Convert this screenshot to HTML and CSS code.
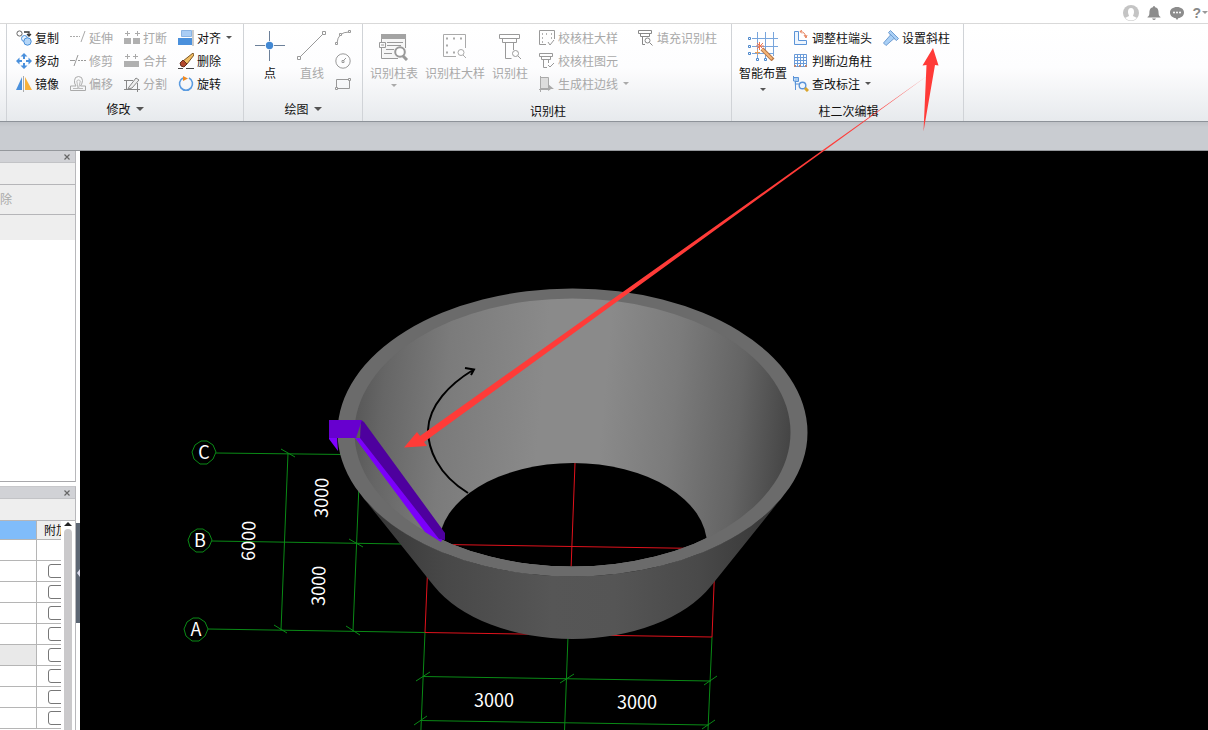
FILE: index.html
```html
<!DOCTYPE html>
<html lang="zh-CN">
<head>
<meta charset="utf-8">
<title>柱二次编辑</title>
<link rel="stylesheet" href="styles.css">
</head>
<body>
<div class="app">
  <header class="topbar">
    <button class="top-btn" aria-label="用户"><svg width="16" height="16" viewBox="0 0 16 16"><circle cx="8" cy="8" r="8" fill="#c4c4c4"/><path d="M5 7a3 4 0 0 1 6 0c0 2-1 3-1 4l4 2q-6 5-12 0l4-2c0-1-1-2-1-4z" fill="#fff"/></svg></button>
    <button class="top-btn" aria-label="通知"><svg width="16" height="16" viewBox="0 0 16 16"><path d="M8 1q1 0 1 1.200c3 .6 3.600 3 3.600 5.800 0 2 .5 3 1.900 4v.6h-13v-.6C2.900 11 3.400 10 3.400 8c0-2.800.6-5.200 3.600-5.800Q7 1 8 1zM6 13.500h4q-2 3-4 0z" fill="#8c8c8c"/></svg></button>
    <button class="top-btn" aria-label="消息"><svg width="16" height="16" viewBox="0 0 16 16"><path d="M8 2c4 0 7 2.300 7 5.500S12 13 9.500 13L8 15l-1.500-2C4 13 1 10.700 1 7.500S4 2 8 2z" fill="#8c8c8c"/><circle cx="5" cy="7.500" r="1" fill="#fff"/><circle cx="8" cy="7.500" r="1" fill="#fff"/><circle cx="11" cy="7.500" r="1" fill="#fff"/></svg></button>
    <button class="top-btn help">?<span class="caret small"></span></button>
  </header>

  <nav class="ribbon">
    <div class="group stub"></div>

    <section class="group modify">
      <div class="tools four">
        <button class="tool"><svg class="ic" viewBox="0 0 16 16" fill="none"><circle cx="3.500" cy="3.500" r="2.600" stroke="#666"/><path d="M8 2h5v4M11 4l2 2 2-2" stroke="#333" stroke-width="1.300"/><circle cx="8.500" cy="8.500" r="3" fill="#e4f0fc" stroke="#4a90d9"/><circle cx="11.500" cy="11.500" r="3.700" fill="#b5d6f7" stroke="#4a90d9"/></svg>复制</button>
        <button class="tool" disabled><svg class="ic" viewBox="0 0 16 16" fill="none" stroke="#aaa"><path d="M0 6.500h10" stroke-dasharray="2 1"/><path d="M11 12l4-11"/></svg>延伸</button>
        <button class="tool" disabled><svg class="ic" viewBox="0 0 16 16"><path d="M0 8h7v6H0zM9 8h7v6H9z" fill="#b0b0b0"/><path d="M1 3.500h5M3.500 1v5M11 3.500h5M13.500 1v5" stroke="#aaa"/></svg>打断</button>
        <button class="tool"><svg class="ic" viewBox="0 0 16 16"><path d="M3.500.5h10v6h-10z" fill="#a9cdf5" stroke="#8bb4e3"/><path d="M0 8h14v7H0z" fill="#4a90dc"/><path d="M15 0v16" stroke="#999"/></svg>对齐<span class="caret"></span></button>

        <button class="tool"><svg class="ic" viewBox="0 0 16 16"><path d="M8 0l3.500 3.500H9V6H7V3.500H4.500zM8 16l3.500-3.500H9V10H7v2.500H4.500zM0 8l3.500-3.500V7H6v2H3.500v2.500zM16 8l-3.500-3.500V7H10v2h2.500v2.500z" fill="#4a90dc"/></svg>移动</button>
        <button class="tool" disabled><svg class="ic" viewBox="0 0 16 16" fill="none" stroke="#999"><path d="M0 7.500h5M4 13l4-11"/><path d="M8 7.500h8" stroke-dasharray="2 1"/></svg>修剪</button>
        <button class="tool" disabled><svg class="ic" viewBox="0 0 16 16"><path d="M0 8h15v6H0z" fill="#b0b0b0"/><path d="M1 3.500h5M3.500 1v5M9 3.500h5M11.500 1v5" stroke="#aaa"/></svg>合并</button>
        <button class="tool"><svg class="ic" viewBox="0 0 16 16"><path d="M15 0l1 2-7 9-4-3z" fill="#f0bd62" stroke="#7b5523"/><path d="M5 7l4 4-3 3-3-1-1-3z" fill="#b2482d" stroke="#63301f"/><path d="M0 15.500h5M8 15.500h8" stroke="#444"/></svg>删除</button>

        <button class="tool"><svg class="ic" viewBox="0 0 16 16"><path d="M6 1v13H0z" fill="#4a90dc"/><path d="M9 1v13h7z" fill="#f8b13a"/><path d="M7.500 0v16" stroke="#aaa"/></svg>镜像</button>
        <button class="tool" disabled><svg class="ic" viewBox="0 0 16 16" fill="none" stroke="#aaa"><path d="M.5 14.500v-4.500H6Q4 7 4.500 4.500a4 4 0 0 1 8 0Q12.500 7 10.500 10h5v4.500z"/><path d="M3 12.500h5Q7.500 9 6.800 5a2 2 0 0 1 3.500 0Q9.500 9 8.500 12.500H13" stroke="#bbb"/></svg>偏移</button>
        <button class="tool" disabled><svg class="ic" viewBox="0 0 16 16" fill="none" stroke="#888"><path d="M0 4.500h9M2.500 4v10M0 13.500h16M13.500 7v9"/><path d="M5 11l7-9 3 2-7 8-4 1z" fill="#eee"/></svg>分割</button>
        <button class="tool"><svg class="ic" viewBox="0 0 16 16" fill="none"><path d="M5 2a6.500 6.500 0 1 0 6 0" stroke="#5a9be0" stroke-width="1.600"/><path d="M5 0l5 2.500L5 5z" fill="#ee8a24"/></svg>旋转</button>
      </div>
      <h2 class="title">修改<span class="caret big-caret"></span></h2>
    </section>

    <section class="group draw">
      <div class="tools">
        <button class="big"><svg class="bic" viewBox="0 0 30 30"><path d="M14.500 0v30M0 14.500h30" stroke="#6c8099"/><circle cx="14.500" cy="14.500" r="4.500" fill="#fff"/><circle cx="14.500" cy="14.500" r="3.700" fill="#4288d3"/></svg>点</button>
        <button class="big" disabled><svg class="bic" viewBox="0 0 30 30" fill="none" stroke="#999"><path d="M3 26L26 3"/><path d="M.5 25.500h3v3h-3zM25.500.5h3v3h-3z" fill="#fff"/></svg>直线</button>
        <div class="stack">
          <button class="tool" disabled aria-label="弧"><svg class="ic" viewBox="0 0 16 16" fill="none" stroke="#999"><path d="M2 13Q3 2 14 2"/><path d="M.5 12.500h2v2h-2zM4.500 3.500h2v2h-2zM13.500.5h2v2h-2z" fill="#fff"/></svg></button>
          <button class="tool" disabled aria-label="圆"><svg class="ic" viewBox="0 0 16 16" fill="none" stroke="#999"><circle cx="8" cy="8" r="7.200"/><path d="M7 7.500h2v2H7zM9 7l2-2"/></svg></button>
          <button class="tool" disabled aria-label="矩形"><svg class="ic" viewBox="0 0 16 16" fill="none" stroke="#999"><path d="M1.500 3.500h13v9h-13z"/><path d="M.5 11.500h2v2h-2zM13.500 2.500h2v2h-2z" fill="#fff"/></svg></button>
        </div>
      </div>
      <h2 class="title">绘图<span class="caret big-caret"></span></h2>
    </section>

    <section class="group identify">
      <div class="tools">
        <button class="big" disabled><svg class="bic" viewBox="0 0 30 30" fill="none" stroke="#999"><path d="M3.500 3.500h24v24h-24z" fill="#f6f6f6" stroke="none"/><path d="M2 3h25v5H2z" fill="#a3a3a3" stroke="none"/><path d="M2.500 8v3M2.500 17v10.500H19M26.500 8v9M8 11.500h16M8 14.500h14M7 18.500h8M5 22.500h8"/><path d="M.5 11.500h6v5h-6zM2 14h3"/><circle cx="21" cy="21" r="4.800" fill="#fff" stroke-width="2"/><path d="M24 25l4 4" stroke-width="3"/></svg>识别柱表<span class="caret small"></span></button>
        <button class="big" disabled><svg class="bic" viewBox="0 0 30 30" fill="none" stroke="#aaa"><path d="M16 25.500H3.500v-22h22V17"/><path d="M6 7.500h2m5 0h2m5 0h2M6 14.500h2M6 21.500h2m5 0h2" stroke-width="2"/><circle cx="21" cy="21.500" r="3" fill="#fff"/><path d="M23 24l3 3"/></svg>识别柱大样</button>
        <button class="big" disabled><svg class="bic" viewBox="0 0 30 30" fill="none" stroke="#999"><path d="M4.500 3.500h20v4h-20zM7.500 7.500h14v4h-14zM10.500 11.500v16h6M18.500 11.500V19"/><circle cx="20.500" cy="22.500" r="3" fill="#fff"/><path d="M23 25l3 3"/></svg>识别柱</button>
        <div class="stack">
          <button class="tool" disabled><svg class="ic" viewBox="0 0 16 16" fill="none" stroke="#999"><path d="M7 14.500H.5V.5h15V9"/><path d="M3 4h1m3 0h1m4 0h1M3 8h1m8 0h1M3 12h1" stroke-width="1.500"/><path d="M9 12l2 3 4-5"/></svg>校核柱大样</button>
          <button class="tool" disabled><svg class="ic" viewBox="0 0 16 16" fill="none" stroke="#999"><path d="M.5.5h13v3H.5zM2.500 3.500v3h9v-3M4.500 6.500v8H8M9.500 6.500V10M9 12l2 2 4-4"/></svg>校核柱图元</button>
          <button class="tool" disabled><svg class="ic" viewBox="0 0 16 16" fill="none" stroke="#aaa"><path d="M1.500 1.500h8v11h-8z" fill="#ddd"/><path d="M1.500 0v16M0 13.500h11"/><path d="M9 8l6 5h-3l-3 2z" fill="#aaa" stroke="none"/></svg>生成柱边线<span class="caret"></span></button>
        </div>
        <div class="stack">
          <button class="tool" disabled><svg class="ic" viewBox="0 0 16 16" fill="none" stroke="#888"><path d="M.5.5h13v3H.5zM2.500 3.500v3h9v-3M4.500 6.500v8H7"/><circle cx="9.500" cy="10.500" r="2.500"/><path d="M11.500 12.500l3 3"/></svg>填充识别柱</button>
        </div>
      </div>
      <h2 class="title low">识别柱</h2>
    </section>

    <section class="group edit">
      <div class="tools">
        <button class="big"><svg class="bic" viewBox="0 0 30 30" fill="none" stroke="#78a5dc"><path d="M4 7.500h26M4 15.500h26M4 22.500h22M9.500 1v26M17.500 1v27M25.500 1v24"/><path d="M.5 6.500h2v2h-2zM.5 14.500h2v2h-2zM.5 21.500h2v2h-2zM8.500 27.500h2v2h-2zM16.500 27.500h2v2h-2z" fill="#fff" stroke="#4d88cc"/><path d="M14 18l11 11" stroke="#b87848" stroke-width="4"/><path d="M14 18l10 10" stroke="#f5b577" stroke-width="2"/><path d="M11.500 11v8M8 15h8M9 12l6 6M15 12l-6 6" stroke="#f07850"/><path d="M9.500 19v5M7 21.500h5" stroke="#e8a05c"/></svg>智能布置<span class="caret small lower"></span></button>
        <div class="stack">
          <button class="tool"><svg class="ic" viewBox="0 0 16 16" fill="none" stroke="#5b94d8"><path d="M1.500 1.500h4v9h8v4h-12z" fill="#eef5fd"/><path d="M7 1.500q5 0 6 6" stroke="#e8835d"/><path d="M9 0L7 1.500 9 3.500M11 5l2 3 1-3" stroke="#e8835d"/></svg>调整柱端头</button>
          <button class="tool"><svg class="ic" viewBox="0 0 16 16" fill="none" stroke="#6a9bd8"><path d="M1.500 1.500h12v12h-12zM4.500 1v13M7.500 1v13M10.500 1v13M1 4.500h13M1 7.500h13M1 10.500h13"/><path d="M1 12h2v2H1zM6 12h2v2H6zM12 12h2v2h-2z" fill="#b98572" stroke="none"/></svg>判断边角柱</button>
          <button class="tool"><svg class="ic" viewBox="0 0 16 16" fill="none" stroke="#5b94d8"><path d="M.5 0v5h2v9M.5 1.500h5v4h-3M2.500 8H6" fill="#a8cdf2"/><circle cx="9.500" cy="9.500" r="3.300" fill="#eef5fd" stroke-width="1.400"/><path d="M12 12l3 3" stroke="#d9a52c" stroke-width="3"/></svg>查改标注<span class="caret"></span></button>
        </div>
        <div class="stack">
          <button class="tool"><svg class="ic" viewBox="0 0 16 16"><path d="M7.500.5l8 8-2 2-2.500-2L3 15.500.500 13 7.500 5 5.500 2.500z" fill="#a9cff5" stroke="#6f9dd2"/><path d="M7 4l5 5" stroke="#6f9dd2"/></svg>设置斜柱</button>
        </div>
      </div>
      <h2 class="title low">柱二次编辑</h2>
    </section>
  </nav>
  <div class="strip"></div>

  <main class="work">
    <aside class="side">
      <section class="panel upper">
        <header class="panel-head"><button class="close" aria-label="关闭"><svg width="6" height="6" viewBox="0 0 6 6"><path d="M.5.5l5 5M5.500.5l-5 5" stroke="#666" stroke-width="1.200"/></svg></button></header>
        <div class="bar"></div>
        <div class="bar tall"><button class="cut" disabled>除</button></div>
        <div class="bar last"></div>
      </section>
      <section class="panel lower-panel">
        <header class="panel-head"><button class="close" aria-label="关闭"><svg width="6" height="6" viewBox="0 0 6 6"><path d="M.5.5l5 5M5.500.5l-5 5" stroke="#666" stroke-width="1.200"/></svg></button></header>
        <div class="bar"></div>
        <div class="grid-area">
          <div class="clip">
            <table class="props">
              <thead><tr><th class="sel"></th><th class="extra">附加</th></tr></thead>
              <tbody>
                <tr><td></td><td></td></tr>
                <tr><td></td><td><input type="checkbox" aria-label="附加 2"></td></tr>
                <tr><td></td><td><input type="checkbox" aria-label="附加 3"></td></tr>
                <tr><td></td><td><input type="checkbox" aria-label="附加 4"></td></tr>
                <tr><td></td><td><input type="checkbox" aria-label="附加 5"></td></tr>
                <tr><td class="shade"></td><td><input type="checkbox" aria-label="附加 6"></td></tr>
                <tr><td></td><td><input type="checkbox" aria-label="附加 7"></td></tr>
                <tr><td></td><td><input type="checkbox" aria-label="附加 8"></td></tr>
                <tr><td></td><td><input type="checkbox" aria-label="附加 9"></td></tr>
              </tbody>
            </table>
          </div>
          <div class="scroll"><span class="up"></span><span class="thumb"></span></div>
        </div>
      </section>
      <button class="splitter" aria-label="折叠"><svg width="4" height="8" viewBox="0 0 4 8"><path d="M4 0v8L1 4z" fill="#dde"/></svg></button>
    </aside>

    <div class="view">
      <svg class="scene" role="img" aria-label="轴网与斜柱三维视图">
        <defs>
          <linearGradient id="inside" gradientUnits="userSpaceOnUse" x1="354" y1="425" x2="792" y2="465">
            <stop offset="0" stop-color="#585858"/><stop offset=".06" stop-color="#666"/><stop offset=".2" stop-color="#7b7b7b"/><stop offset=".42" stop-color="#8a8a8a"/><stop offset=".56" stop-color="#8a8a8a"/><stop offset=".72" stop-color="#7b7b7b"/><stop offset=".87" stop-color="#646464"/><stop offset="1" stop-color="#424242"/>
          </linearGradient>
          <linearGradient id="outside" gradientUnits="userSpaceOnUse" x1="361" y1="0" x2="784" y2="0">
            <stop offset="0" stop-color="#343434"/><stop offset=".2" stop-color="#484848"/><stop offset=".45" stop-color="#565656"/><stop offset=".6" stop-color="#555"/><stop offset=".8" stop-color="#494949"/><stop offset="1" stop-color="#343434"/>
          </linearGradient>
          <clipPath id="mouth"><ellipse cx="572.500" cy="432.500" rx="218" ry="134"/></clipPath>
        </defs>
        <g transform="translate(-80 -151)">
          <g class="axis">
            <path d="M216 453L345 454.500M212 541L401 544M208 629L425 632.500"/>
            <path d="M288 453L281 630M360 460L353 631"/>
            <path d="M281 449L295 457M274 625L287 633M349 539L363 547M346 626L360 635"/>
            <path d="M425 632L418 800M568 636L562 800M712 637L705 800"/>
            <path d="M423 676.500L711 681M420 720.500L709 725"/>
            <path d="M416 681L430 672M560 683L574 674M704 685L717 676M414 725L427 716M702 729L715 720"/>
            <path d="M216 452l-3 7-6 5h-7l-6-5-2-7 3-7 6-4h6l6 4z"/>
            <path d="M212 540l-3 7-6 5h-7l-6-5-2-7 3-7 6-4h6l6 4z"/>
            <path d="M208 629l-3 7-6 5h-7l-6-5-2-7 3-7 6-4h6l6 4z"/>
          </g>
          <path class="beam" d="M428 560L425 632.500L712 637L715 560"/>
          <path d="M361 495L434 586A154 94 0 0 0 711 586L784 495A235 144 0 0 1 361 495z" fill="url(#outside)"/>
          <ellipse cx="572.500" cy="432.500" rx="220" ry="136" fill="url(#inside)"/>
          <g clip-path="url(#mouth)">
            <ellipse cx="573" cy="545" rx="134" ry="82"/>
            <path class="beam" d="M575 463L571 570M445 544.500L700 548.500"/>
          </g>
          <path fill-rule="evenodd" fill="#6b6b6b" d="M337.500 432.500a235 144 0 0 1 470 0a235 144 0 0 1-470 0zM354.500 432.500a218 134 0 0 0 436 0a218 134 0 0 0-436 0z"/>
          <path d="M468 493C437 474 428 448 428 430C429 405 450 384 473 370M465 368L474 369.500L471 375" fill="none" stroke="#000" stroke-width="2"/>
          <path d="M329 437h8l1 14-9-12z" fill="#7f00ff"/>
          <path d="M355 438h10l79 98-3 6-16-10z" fill="#7b00fa"/>
          <path d="M361 420l3 2 81 111v7l-6-1-79-101z" fill="#4e009e"/>
          <path d="M329 420h33l-6 18h-27z" fill="#6700cf"/>
          <g class="labels">
            <text x="204" y="459">C</text><text x="200" y="547">B</text><text x="196" y="636">A</text>
            <text x="494" y="707">3000</text><text x="637" y="709">3000</text>
            <text transform="translate(328 498) rotate(-89)">3000</text>
            <text transform="translate(325 586) rotate(-89)">3000</text>
            <text transform="translate(255 541) rotate(-89)">6000</text>
          </g>
        </g>
      </svg>
    </div>
  </main>

  <svg class="callout" aria-hidden="true">
    <path d="M404 447.500L417 432L420 436L927 76L424 442L427 446z"/>
    <path d="M933 48L938.500 65.500L935 65L923.500 131.500L926.500 65L922.500 65.500z"/>
  </svg>
</div>
</body>
</html>
```
FILE: styles.css
```css
* { box-sizing: border-box; }

body {
  margin: 0;
  background: #fff;
  color: #111;
  font: 12px/16px "Noto Sans CJK SC", "Liberation Sans", sans-serif;
}

button {
  margin: 0;
  padding: 0;
  border: 0;
  background: none;
  color: inherit;
  font: inherit;
  white-space: nowrap;
}

button:disabled { color: #a9a9a9; }
svg { display: block; flex: none; }

.app {
  position: relative;
  display: flex;
  flex-direction: column;
  height: 100vh;
  overflow: hidden;
}

/* Title bar */
.topbar {
  display: flex;
  flex: none;
  align-items: center;
  justify-content: flex-end;
  gap: 7px;
  height: 24px;
  padding-top: 2px;
  border-bottom: 1px solid #d9d9d9;
}

.help {
  display: flex;
  align-items: center;
  gap: 1px;
  color: #888;
  font: bold 14px/16px "Liberation Sans", sans-serif;
}

.caret {
  width: 0;
  border: 3px solid transparent;
  border-top-color: #555;
  border-bottom: 0;
}

.caret.small { border-width: 3px 3px 0; }
.help .caret { border-top-color: #999; }
.caret.big-caret { border-width: 4px 4px 0; }
button:disabled .caret { border-top-color: #aaa; }

/* Ribbon */
.ribbon {
  display: flex;
  flex: none;
  height: 98px;
  background: linear-gradient(#fff 0, #fdfdfe 45%, #e7eaed 100%);
  border-bottom: 1px solid #8d9299;
}

.group {
  display: flex;
  flex: none;
  flex-direction: column;
  justify-content: space-between;
  padding-top: 2px;
  border-right: 1px solid #d0d3d7;
}

.stub { width: 7px; }
.modify { width: 237px; padding-left: 9px; padding-right: 9px; }
.draw { width: 119px; }
.identify { width: 369px; }
.edit { width: 232px; }

.tools { display: flex; }

.four {
  display: grid;
  grid-template-columns: repeat(4, 54px);
}

.tool {
  display: flex;
  align-items: center;
  gap: 3px;
  height: 23px;
}

.tool .caret { margin-left: 2px; }
.ic { width: 16px; height: 16px; }
.bic { width: 30px; height: 30px; }

.big {
  display: flex;
  flex-direction: column;
  align-items: center;
  padding-top: 5px;
}

.bic { margin-bottom: 4px; }
.big .caret { margin-top: 3px; }
.big .caret.lower { margin-top: 7px; }

.draw .tools { gap: 12px; padding-left: 11px; }
.draw .stack { margin-left: -4px; }
.identify .tools { gap: 8px; padding-left: 7px; }
.identify .big + .big { margin-left: -1px; }
.identify .stack { margin-left: 3px; }
.identify .stack + .stack { margin-left: 1px; }
.edit .tools { gap: 6px; padding-left: 7px; }
.edit .stack + .stack { margin-left: 5px; }

.title {
  display: flex;
  align-items: center;
  justify-content: center;
  gap: 5px;
  margin: 0;
  padding-bottom: 4px;
  font-size: 12px;
  font-weight: 400;
  line-height: 16px;
}

.title.low { padding: 0 0 2px 2px; }

.strip {
  flex: none;
  height: 29px;
  background: linear-gradient(#bfc2c7, #c9ccd1 5px);
  border-bottom: 1px solid #95989c;
}

/* Work area */
.work {
  display: flex;
  flex: 1;
  min-height: 0;
}

.side {
  position: relative;
  display: flex;
  flex: none;
  flex-direction: column;
  gap: 4px;
  width: 80px;
  padding-right: 4px;
}

.panel { border-right: 1px solid #b8b8bb; }

.upper {
  height: 331px;
  border-bottom: 1px solid #a8a8ab;
}

.lower-panel {
  display: flex;
  flex: 1;
  flex-direction: column;
  min-height: 0;
  border-top: 1px solid #c8c8cb;
}

.panel-head {
  display: flex;
  flex: none;
  align-items: center;
  justify-content: flex-end;
  height: 12px;
  padding-right: 5px;
  background: #d1d2d6;
  border-bottom: 1px solid #c2c3c6;
}

.bar {
  flex: none;
  height: 22px;
  background: #eee;
  border-bottom: 1px solid #b5b5b8;
}

.bar.tall { height: 30px; }
.bar.last { height: 25px; border: 0; }
.cut { line-height: 28px; }

.grid-area {
  display: flex;
  flex: 1;
  min-height: 0;
}

.clip {
  flex: none;
  width: 61px;
  overflow: hidden;
}

.props {
  width: 100px;
  table-layout: fixed;
  border-collapse: separate;
  border-spacing: 0;
}

.props th,
.props td {
  height: 21px;
  padding: 0;
  border-bottom: 1px solid #b5b5b5;
  font-weight: 400;
  text-align: left;
}

.props th { height: 19px; line-height: 18px; }
.props th:first-child,
.props td:first-child { width: 37px; border-right: 1px solid #b5b5b5; }
.props .sel { background: #80bcfa; }
.props .extra { padding-left: 7px; background: #eee; }
.props .shade { background: #e9e9e9; }

.props input {
  display: block;
  width: 16px;
  height: 14px;
  margin: 0 0 0 11px;
  appearance: none;
  background: #fff;
  border: 1px solid #777;
  border-radius: 3px;
}

.scroll {
  display: flex;
  flex: 1;
  flex-direction: column;
  align-items: center;
  gap: 3px;
  padding-top: 1px;
}

.up {
  border: 4px solid transparent;
  border-top: 0;
  border-bottom-color: #222;
}

.thumb {
  flex: 1;
  width: 8px;
  background: #cac9cb;
  border-radius: 4px 4px 0 0;
}

.splitter {
  position: absolute;
  top: 372px;
  right: 0;
  display: flex;
  align-items: center;
  width: 4px;
  height: 100px;
  background: #5c6673;
}

.view {
  flex: 1;
  min-width: 0;
  background: #000;
}

.scene { width: 100%; height: 100%; }
.axis { fill: none; stroke: #0a8a16; }
.beam { fill: none; stroke: #e0121c; }

.labels {
  fill: #fff;
  font-size: 18px;
  text-anchor: middle;
}

.callout {
  position: absolute;
  inset: 0;
  width: 100%;
  height: 100%;
  fill: #ff3b38;
  pointer-events: none;
}
```
